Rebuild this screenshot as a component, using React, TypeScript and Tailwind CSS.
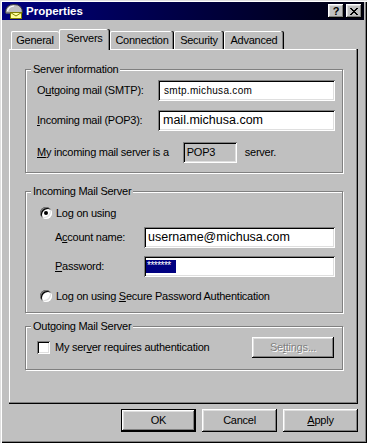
const raised =
  "shadow-[inset_-1px_-1px_0_#000,inset_1px_1px_0_#fff,inset_-2px_-2px_0_#808080,inset_2px_2px_0_#dfdfdf]";
const sunken =
  "shadow-[inset_1px_1px_0_#808080,inset_-1px_-1px_0_#fff,inset_2px_2px_0_#000,inset_-2px_-2px_0_#dfdfdf]";

function U({ children }: { children: React.ReactNode }) {
  return <span className="underline underline-offset-[1px]">{children}</span>;
}

function MailIcon() {
  return (
    <svg width="18" height="16" viewBox="0 0 18 16">
      <path d="M0.5 10 Q0.5 1.5 9 1.5 Q17.5 1.5 17.5 10 Z" fill="#c0c0c0" stroke="#404040" strokeWidth="1" />
      <path d="M2.5 8 Q3.5 3.5 9 3" fill="none" stroke="#fff" strokeWidth="1.2" />
      <path d="M1 10 H17" stroke="#808080" strokeWidth="1" />
      <rect x="5.5" y="9.5" width="11" height="6" fill="#ffff99" stroke="#808000" strokeWidth="1" />
      <path d="M5.5 9.5 L11 13 L16.5 9.5" fill="none" stroke="#808000" strokeWidth="1" />
    </svg>
  );
}

function Group({
  title,
  className,
  children,
}: {
  title: React.ReactNode;
  className: string;
  children: React.ReactNode;
}) {
  return (
    <div className={`border border-[#808080] shadow-[1px_1px_0_#fff,inset_1px_1px_0_#fff] ${className}`}>
      <div className="-mt-[7px] ml-[5px] w-fit px-[2px] bg-[#c0c0c0] leading-[13px]">{title}</div>
      {children}
    </div>
  );
}

function Radio({ checked }: { checked?: boolean }) {
  return (
    <div className="w-[12px] h-[12px] rounded-full bg-white flex items-center justify-center shadow-[inset_1px_1px_0_#808080,inset_-1px_-1px_0_#fff,inset_2px_2px_0_#000,inset_-2px_-2px_0_#dfdfdf]">
      {checked && <div className="w-[4px] h-[4px] rounded-full bg-black" />}
    </div>
  );
}

const tabs = [
  { label: "General", w: "w-[48px]", edge: false },
  { label: "Servers", w: "w-[51px]", selected: true },
  { label: "Connection", w: "w-[64px]", edge: true },
  { label: "Security", w: "w-[50px]", edge: true },
  { label: "Advanced", w: "w-[60px]", edge: true },
];

export default function App() {
  return (
    <div className="w-[367px] h-[443px] overflow-hidden bg-[#c0c0c0] pt-[2px] pl-[2px] pr-[3px] shadow-[inset_1px_1px_0_#dfdfdf,inset_2px_2px_0_#fff,inset_-1px_-1px_0_#000,inset_-2px_-2px_0_#808080] text-[11px] leading-[13px] text-black tracking-[-0.25px] font-['Liberation_Sans',Arial,sans-serif]">
      {/* title bar */}
      <div className="h-[18px] flex items-center bg-linear-to-r from-[#000080] to-[#000010] pl-[3px] pr-[2px]">
        <MailIcon />
        <span className="ml-[3px] text-white font-bold text-[11.5px] tracking-normal">Properties</span>
        <div className="ml-auto flex gap-[2px]">
          <div className={`w-[16px] h-[14px] bg-[#c0c0c0] ${raised} flex items-center justify-center font-bold text-[11px] leading-none pt-[1px]`}>
            ?
          </div>
          <div className={`w-[16px] h-[14px] bg-[#c0c0c0] ${raised} flex items-center justify-center`}>
            <svg width="8" height="7" viewBox="0 0 8 7">
              <path d="M0 0h2v1h1v1h2v-1h1v-1h2v1h-1v1h-1v1h-1v1h1v1h1v1h1v1h-2v-1h-1v-1h-2v1h-1v1h-2v-1h1v-1h1v-1h1v-1h-1v-1h-1v-1h-1z" fill="#000" />
            </svg>
          </div>
        </div>
      </div>

      <div className="pl-[7px] pr-[6px] pt-[9px]">
        {/* tabs */}
        <div className="flex items-end h-[20px] pl-[2px]">
          {tabs.map((t) =>
            t.selected ? (
              <div
                key={t.label}
                className={`relative z-10 ${t.w} h-[21px] -mb-[1px] bg-[#c0c0c0] rounded-t-[2px] flex items-center justify-center pb-[3px] shadow-[inset_-1px_0_0_#000,inset_-2px_0_0_#808080,inset_1px_0_0_#fff,inset_0_1px_0_#fff]`}
              >
                {t.label}
              </div>
            ) : (
              <div
                key={t.label}
                className={`${t.w} h-[18px] rounded-t-[2px] flex items-center justify-center ${
                  t.edge
                    ? "shadow-[inset_-1px_0_0_#000,inset_-2px_0_0_#808080,inset_1px_0_0_#fff,inset_0_1px_0_#fff]"
                    : "shadow-[inset_1px_0_0_#fff,inset_0_1px_0_#fff]"
                }`}
              >
                {t.label}
              </div>
            )
          )}
        </div>

        {/* panel */}
        <div className="h-[355px] pt-[20px] pl-[16px] pr-[15px] shadow-[inset_-1px_-1px_0_#000,inset_-2px_-2px_0_#808080,inset_1px_1px_0_#fff]">
          <Group title="Server information" className="h-[104px]">
            <div className="mt-[4px] flex items-center justify-between pl-[11px] pr-[7px]">
              <span>
                O<U>u</U>tgoing mail (SMTP):
              </span>
              <div className={`w-[177px] h-[21px] bg-white ${sunken} flex items-center pl-[6px] text-[10px] tracking-[0.3px]`}>
                smtp.michusa.com
              </div>
            </div>
            <div className="mt-[9px] flex items-center justify-between pl-[11px] pr-[7px]">
              <span>
                <U>I</U>ncoming mail (POP3):
              </span>
              <div className={`w-[177px] h-[21px] bg-white ${sunken} flex items-center pl-[5px] text-[12.5px] tracking-normal`}>
                mail.michusa.com
              </div>
            </div>
            <div className="mt-[11px] flex items-center pl-[11px]">
              <span>
                <U>M</U>y incoming mail server is a
              </span>
              <div className={`ml-[14px] w-[54px] h-[21px] ${sunken} flex items-center pl-[4px]`}>POP3</div>
              <span className="ml-[8px]">server.</span>
            </div>
          </Group>

          <Group title="Incoming Mail Server" className="mt-[18px] h-[122px]">
            <div className="mt-[9px] h-[12px] flex items-center pl-[14px]">
              <Radio checked />
              <span className="ml-[4px]">
                Lo<U>g</U> on using
              </span>
            </div>
            <div className="mt-[8px] flex items-center justify-between pl-[29px] pr-[7px]">
              <span>
                A<U>c</U>count name:
              </span>
              <div className={`w-[191px] h-[21px] bg-white ${sunken} flex items-center pl-[4px] text-[12.5px] tracking-normal`}>
                username@michusa.com
              </div>
            </div>
            <div className="mt-[8px] flex items-center justify-between pl-[29px] pr-[7px]">
              <span>
                <U>P</U>assword:
              </span>
              <div className={`w-[191px] h-[21px] bg-white ${sunken} flex items-center pl-[2px]`}>
                <span className="h-[13px] w-[30px] bg-[#000080] text-white text-[10px] leading-[11px] tracking-[-0.5px] pl-[1px] overflow-hidden">
                  *******
                </span>
              </div>
            </div>
            <div className="mt-[13px] h-[12px] flex items-center pl-[14px]">
              <Radio />
              <span className="ml-[4px]">
                Log on using <U>S</U>ecure Password Authentication
              </span>
            </div>
          </Group>

          <Group title="Outgoing Mail Server" className="mt-[13px] h-[44px]">
            <div className="mt-[4px] flex items-center justify-between pl-[11px] pr-[8px]">
              <div className="flex items-center">
                <div className={`w-[13px] h-[13px] bg-white ${sunken}`} />
                <span className="ml-[5px]">
                  My ser<U>v</U>er requires authentication
                </span>
              </div>
              <div className={`w-[82px] h-[21px] ${raised} flex items-center justify-center text-[#808080] [text-shadow:1px_1px_0_#fff]`}>
                Se<U>t</U>tings...
              </div>
            </div>
          </Group>
        </div>

        {/* dialog buttons */}
        <div className="mt-[5px] flex justify-end gap-[6px]">
          <div className="w-[75px] h-[23px] flex items-center justify-center shadow-[inset_0_0_0_1px_#000,inset_-2px_-2px_0_#000,inset_2px_2px_0_#fff,inset_-3px_-3px_0_#808080,inset_3px_3px_0_#dfdfdf]">
            OK
          </div>
          <div className={`w-[75px] h-[23px] flex items-center justify-center ${raised}`}>Cancel</div>
          <div className={`w-[75px] h-[23px] flex items-center justify-center ${raised}`}>
            <U>A</U>pply
          </div>
        </div>
      </div>
    </div>
  );
}
